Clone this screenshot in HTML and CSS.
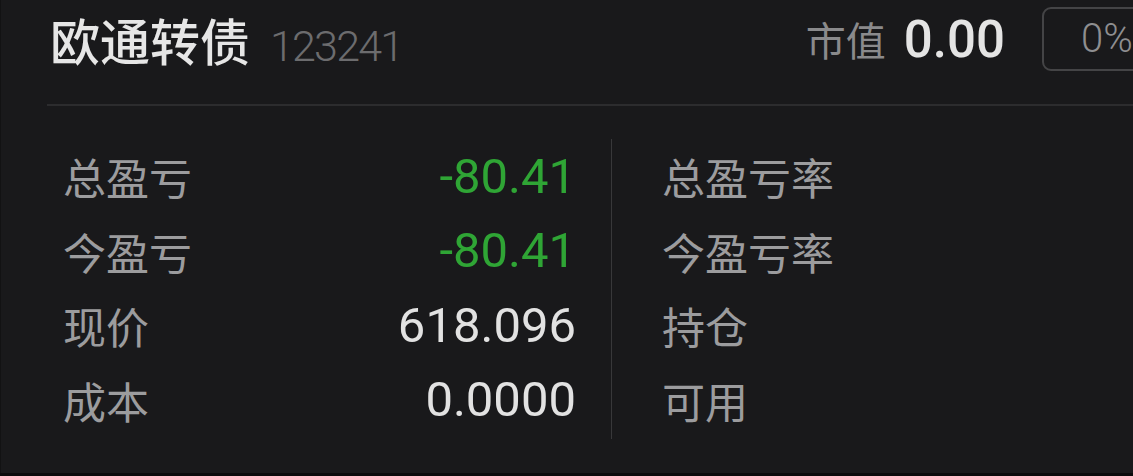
FILE: index.html
```html
<!DOCTYPE html>
<html lang="zh-CN">
<head>
    <meta charset="UTF-8">
    <meta name="viewport" content="width=device-width, initial-scale=1.0">
    <title>欧通转债</title>
    <link rel="stylesheet" href="styles.css">
</head>
<body>
    <div class="panel">
        <div class="header">
            <div class="name">
                <span class="title">欧通转债</span>
                <span class="code">123241</span>
            </div>
            <div class="market">
                <span class="market-label">市值</span>
                <span class="market-value">0.00</span>
                <div class="ratio">0%</div>
            </div>
        </div>
        <div class="divider"></div>

        <div class="stats">
            <div class="col left">
                <div class="row"><span class="label">总盈亏</span><span class="value down">-80.41</span></div>
                <div class="row"><span class="label">今盈亏</span><span class="value down">-80.41</span></div>
                <div class="row"><span class="label">现价</span><span class="value">618.096</span></div>
                <div class="row"><span class="label">成本</span><span class="value">0.0000</span></div>
            </div>
            <div class="vline"></div>
            <div class="col right">
                <div class="row"><span class="label">总盈亏率</span></div>
                <div class="row"><span class="label">今盈亏率</span></div>
                <div class="row"><span class="label">持仓</span></div>
                <div class="row"><span class="label">可用</span></div>
            </div>
        </div>
    </div>
</body>
</html>
```
FILE: styles.css
```css
body {
    margin: 0;
    background-color: #0b0b0c;
    font-family: Roboto, "Noto Sans CJK SC", sans-serif;
    overflow: hidden;
}

.panel {
    height: 473px;
    background-color: #19191b;
    border-left: 1px solid #121213;
    overflow: hidden;
}

.header {
    display: flex;
    align-items: center;
    justify-content: space-between;
    padding: 7px 0 0 49px;
    height: 64px;
}

.name {
    display: flex;
    align-items: baseline;
}

.title {
    font-size: 50px;
    font-weight: 500;
    color: #e6e6e6;
}

.code {
    margin-left: 20px;
    font-size: 43px;
    font-weight: 300;
    letter-spacing: -1.8px;
    color: #6c6c6e;
}

.market {
    display: flex;
    align-items: center;
    margin-right: -40px;
}

.market-label {
    font-size: 40px;
    color: #8a8a8c;
}

.market-value {
    margin-left: 18px;
    font-size: 51px;
    font-weight: 500;
    color: #e4e4e4;
}

.ratio {
    margin-left: 37px;
    width: 90px;
    height: 60px;
    padding-left: 37px;
    border: 2px solid #444446;
    border-radius: 9px;
    font-size: 40px;
    font-weight: 300;
    line-height: 60px;
    color: #8e8e90;
}

.divider {
    margin: 33px 0 0 46px;
    height: 2px;
    background-color: #2c2c2e;
}

.stats {
    display: flex;
    padding: 33px 0 0 62px;
}

.col {
    display: flex;
    flex-direction: column;
}

.col.left {
    width: 513px;
    margin-right: 35px;
}

.col.right {
    padding-left: 50px;
}

.row {
    display: flex;
    align-items: center;
    justify-content: space-between;
    height: 74.5px;
}

.label {
    font-size: 43px;
    color: #9c9c9e;
}

.value {
    font-size: 49px;
    color: #e2e2e2;
}

.value.down {
    color: #2fa535;
}

.vline {
    width: 1px;
    height: 300px;
    background-color: #38383a;
}
```
